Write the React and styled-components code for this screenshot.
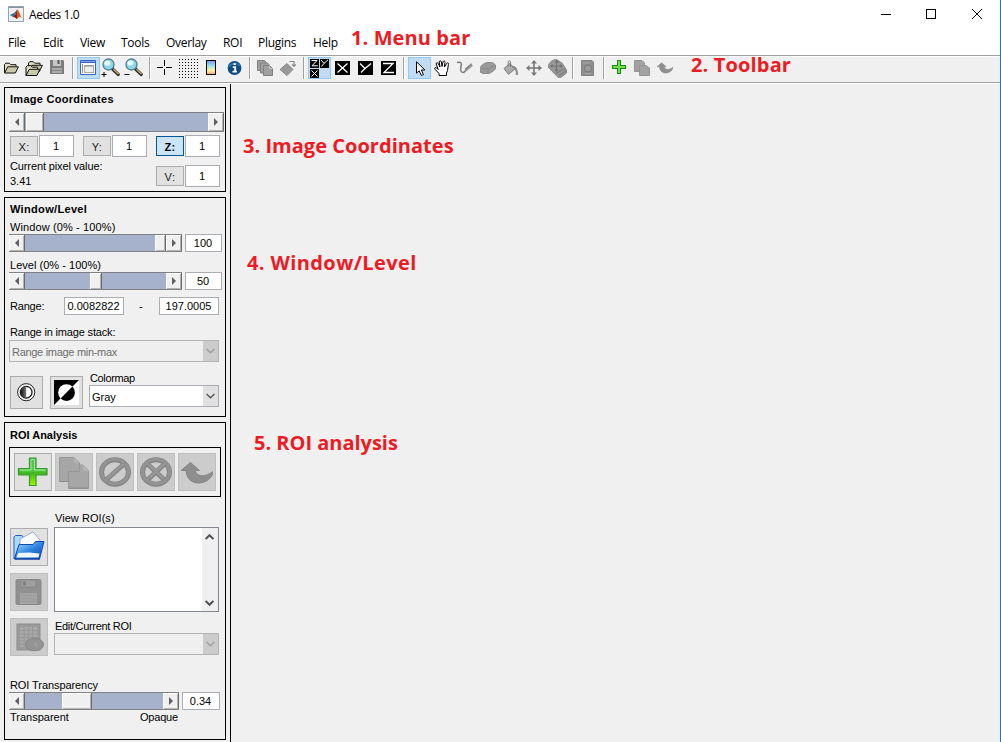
import React from "react";
import styled, { createGlobalStyle, css } from "styled-components";

const GlobalStyle = createGlobalStyle`
  * { box-sizing: border-box; }
  html, body { margin: 0; padding: 0; overflow: hidden; background: #f0f0f0; }
  svg { display: block; flex: none; }
`;

/* ---------- window chrome ---------- */

const Window = styled.div`
  position: relative;
  width: 1001px;
  height: 742px;
  display: flex;
  flex-direction: column;
  background: #f0f0f0;
  border-right: 1px solid #0a7bd8;
  color: #000;
  font-family: "Liberation Sans", Arial, sans-serif;
  font-size: 11px;
  overflow: hidden;
`;

const TitleBar = styled.header`
  flex: none;
  height: 31px;
  display: flex;
  align-items: flex-start;
  justify-content: space-between;
  background: #fff;
  padding: 6px 17px 0 8px;
`;

const TitleText = styled.div`
  display: flex;
  gap: 5px;
  font: 12px/17px "Open Sans", "Noto Sans", sans-serif;
  letter-spacing: -0.45px;
`;

const WindowButtons = styled.div`
  display: flex;
  gap: 34px;
  padding-top: 2px;
`;

const MenuBar = styled.nav`
  flex: none;
  height: 24px;
  display: flex;
  background: #fff;
  padding-left: 8px;
`;

const MenuItem = styled.span`
  width: ${(p) => p.$width}px;
  font: 12px/24px "Open Sans", "Noto Sans", sans-serif;
  letter-spacing: -0.3px;
  white-space: nowrap;
`;

const ToolBar = styled.div`
  flex: none;
  height: 29px;
  display: flex;
  background: #f0f0f0;
  border-top: 1px solid #a0a0a0;
  border-bottom: 1px solid #fff;
  box-shadow: inset 0 1px #fff, inset 0 -1px #a0a0a0;
  padding-top: 1px;
`;

const Tool = styled.button`
  flex: none;
  width: 23px;
  height: 22px;
  padding: ${(p) => (p.$right ? "0 0 0 1px" : "0 1px 0 0")};
  display: flex;
  align-items: center;
  justify-content: center;
  border: 1px solid ${(p) => (p.$active ? "#90c8f6" : "transparent")};
  background: ${(p) => (p.$active ? "#c0dcf3" : "transparent")};
`;

const Separator = styled.span`
  flex: none;
  width: 2px;
  height: 22px;
  margin: 0 3px;
  background: linear-gradient(90deg, #a0a0a0 50%, #fff 50%);
`;

const Body = styled.main`
  flex: 1;
  display: flex;
  min-height: 0;
`;

const Sidebar = styled.aside`
  width: 231px;
  border-right: 1px solid #000;
  padding: 3px 4px 0 4px;
  display: flex;
  flex-direction: column;
  gap: 5px;
`;

const Panel = styled.section`
  flex: none;
  width: 222px;
  height: ${(p) => p.$height}px;
  border: 1px solid #000;
  padding: ${(p) => p.$top || 4}px 0 0 4px;
`;

/* ---------- shared controls ---------- */

const Heading = styled.h2`
  margin: 0 0 0 1px;
  font-size: 11px;
  line-height: 14px;
  font-weight: bold;
  letter-spacing: ${(p) => p.$spacing}px;
  white-space: nowrap;
`;

const Label = styled.div`
  height: 14px;
  line-height: 14px;
  width: ${(p) => (p.$width ? `${p.$width}px` : "auto")};
  margin: ${(p) => p.$top || 0}px 0 0 ${(p) => (p.$left === undefined ? 1 : p.$left)}px;
  letter-spacing: ${(p) => p.$spacing || 0}px;
  white-space: nowrap;
`;

const Row = styled.div`
  display: flex;
  align-items: ${(p) => p.$align || "flex-start"};
  gap: ${(p) => p.$gap || 0}px;
  margin-top: ${(p) => p.$top || 0}px;
  margin-left: ${(p) => p.$left || 0}px;
`;

const Column = styled.div`
  display: flex;
  flex-direction: column;
  gap: ${(p) => p.$gap || 0}px;
`;

const Field = styled.div`
  flex: none;
  width: ${(p) => p.$width}px;
  height: ${(p) => p.$height || 18}px;
  line-height: ${(p) => (p.$height || 18) - 1}px;
  padding-right: 1px;
  border: 1px solid #abadb3;
  background: #fff;
  text-align: center;
`;

const AxisButton = styled.button`
  flex: none;
  width: 28px;
  height: 20px;
  padding: 2px 0 0;
  border: 1px solid ${(p) => (p.$active ? "#00559b" : "#adadad")};
  background: ${(p) => (p.$active ? "#cce4f7" : "#e1e1e1")};
  color: ${(p) => (p.$active ? "#000" : "#222")};
  font: ${(p) => (p.$active ? "bold" : "normal")} 11px/15px "Liberation Sans", Arial, sans-serif;
  letter-spacing: 0.4px;
`;

const IconButton = styled.button`
  flex: none;
  width: ${(p) => p.$size || 38}px;
  height: ${(p) => p.$size || 38}px;
  padding: 0;
  display: flex;
  align-items: center;
  justify-content: center;
  border: 1px solid ${(p) => (p.$disabled ? "#bfbfbf" : "#adadad")};
  background: ${(p) => (p.$disabled ? "#cccccc" : "#e1e1e1")};
`;

const SliderFrame = styled.div`
  flex: none;
  display: flex;
  width: ${(p) => p.$width}px;
  height: ${(p) => p.$height || 18}px;
  background: #a6b1cb;
  border-top: 1px solid #808080;
  border-bottom: 1px solid #808080;
`;

const raised = css`
  background: #f0f0f0;
  border-right: 1px solid #696969;
  box-shadow: inset 1px 1px #fff, inset -1px -1px #b4b4b4;
`;

const SliderArrow = styled.span`
  flex: none;
  width: 16px;
  display: flex;
  align-items: center;
  justify-content: center;
  ${raised}
`;

const SliderThumb = styled.span`
  flex: none;
  width: ${(p) => p.$width}px;
  margin-left: ${(p) => p.$offset}px;
  margin-right: auto;
  ${raised}
`;

const ComboFrame = styled.div`
  display: flex;
  justify-content: space-between;
  width: ${(p) => p.$width}px;
  height: 22px;
  border: 1px solid ${(p) => (p.$disabled ? "#b4b4b4" : "#abadb3")};
  background: ${(p) => (p.$disabled ? "#efefef" : "#fff")};
  color: ${(p) => (p.$disabled ? "#6d6d6d" : "#000")};
  line-height: 22px;
  padding-left: 2px;
  letter-spacing: ${(p) => p.$spacing || 0}px;
`;

const ComboArrow = styled.span`
  width: 15px;
  padding-right: 1px;
  display: flex;
  align-items: center;
  justify-content: center;
  background: ${(p) => (p.$disabled ? "#cccccc" : "#e1e1e1")};
`;

const ListBox = styled.div`
  width: 165px;
  height: 85px;
  display: flex;
  justify-content: flex-end;
  border: 1px solid #828790;
  background: #fff;
`;

const ListScroll = styled.div`
  width: 16px;
  display: flex;
  flex-direction: column;
  justify-content: space-between;
  align-items: center;
  padding: 6px 1px 5px 0;
  background: #f0f0f0;
`;

const ToolGroup = styled.div`
  width: 212px;
  height: 50px;
  display: flex;
  gap: 3px;
  padding: 5px 4px;
  margin-top: 5px;
  border: 1px solid #000;
`;

const Note = styled.div`
  position: absolute;
  left: ${(p) => p.$x}px;
  top: ${(p) => p.$y}px;
  color: #ed1c24;
  font: bold 20px/26px "Open Sans", "Noto Sans", sans-serif;
  letter-spacing: ${(p) => p.$spacing}px;
  white-space: nowrap;
`;

/* ---------- icons ---------- */

const Icon = ({ children, size = 16, box = 16, crisp }) => (
  <svg width={size} height={size} viewBox={`0 0 ${box} ${box}`} fill="none" shapeRendering={crisp ? "crispEdges" : "auto"}>
    {children}
  </svg>
);

const Triangle = ({ right }) => (
  <svg width="4" height="8" viewBox="0 0 4 8">
    <path d={right ? "M0 0L4 4L0 8Z" : "M4 0L0 4L4 8Z"} fill="#606060" />
  </svg>
);

const Chevron = ({ color = "#505050", up, bold }) => (
  <svg width="9" height="6" viewBox="0 0 9 6" fill="none">
    <path d={up ? "M.6 5L4.5 1.2L8.4 5" : "M.6 1L4.5 4.8L8.4 1"} stroke={color} strokeWidth={bold ? 2 : 1.2} />
  </svg>
);

const Matlab = () => (
  <Icon>
    <rect x=".5" y=".5" width="15" height="15" fill="#eef0f2" stroke="#9aa4ae" />
    <path d="M1 1.5H15" stroke="#7d93ac" />
    <path d="M2 9L6 7L9 4L7 10L5 11Z" fill="#2f6ea5" />
    <path d="M9 3.5C10.5 3.5 12 9 14 12L11.5 10.5L9 13L6.5 10.5Z" fill="#d9541e" />
    <path d="M9 3.5C8.5 7 7.5 9.5 5 11L7 11.5L9 13Z" fill="#7c2418" />
  </Icon>
);

const FolderShape = ({ x = 0, y = 0 }) => (
  <g transform={`translate(${x} ${y})`} stroke="#111" strokeLinejoin="round">
    <path d="M.7 12.5V4L2 2.7H5.5L7 4.2H12.2V6" fill="#deddc2" />
    <path d="M.7 12.5L4 6.3H14.6L11.6 12.5Z" fill="#c9c9a8" />
  </g>
);

const FolderOpen = () => <Icon><FolderShape x={0.8} y={0.5} /></Icon>;
const Folders = () => (
  <Icon size={18} box={18}><FolderShape x={2.8} y={0} /><FolderShape x={0.3} y={4} /></Icon>
);
const SaveSmall = () => (
  <Icon>
    <path d="M1 0H14L15 1V14H1Z" fill="#7c7c7c" />
    <rect x="4" y="0" width="8" height="6" fill="#c6c6c6" />
    <rect x="8.5" y="0" width="2" height="4" fill="#555" />
    <rect x="3" y="8" width="10" height="5" fill="#aaa" />
    <path d="M3 10.5H13" stroke="#888" />
  </Icon>
);
const PanelView = () => (
  <Icon>
    <rect x="0" y="0" width="16" height="15" fill="#3465c0" rx="1" />
    <rect x="1" y="3" width="14" height="11" fill="#fff" />
    <path d="M1 1.5H15" stroke="#7ba0ea" />
    <rect x="4.5" y="5.5" width="9" height="7" fill="#eee" stroke="#aaa" />
    <path d="M2.5 4V13M5 6H13" stroke="#777" strokeWidth=".8" />
  </Icon>
);
const Magnifier = ({ plus }) => (
  <Icon size={20} box={20}>
    <path d="M11.5 11L17.3 16.5" stroke="#333" strokeWidth="3.2" strokeLinecap="round" />
    <path d="M12.5 11.2L17.5 16" stroke="#c9a46a" strokeWidth="1.5" />
    <circle cx="7.5" cy="6.5" r="5.5" fill="#8fd8ec" stroke="#527c93" strokeWidth="1.3" />
    <ellipse cx="6.3" cy="5" rx="3" ry="2.5" fill="#e8fbff" />
    <path d={plus ? "M.5 16.5H5.5M3 14V19" : "M.5 16.5H5.5"} stroke="#000" />
  </Icon>
);
const Crosshair = () => (
  <Icon crisp><path d="M0 7.5H6M9 7.5H15M7.5 0V6M7.5 9V15" stroke="#000" /></Icon>
);
const Dots = () => (
  <Icon size={20} box={20} crisp>
    {[1, 4, 7, 10, 13, 16, 19].flatMap((y) =>
      [1, 4, 7, 10, 13, 16, 19].map((x) => <rect key={`${x}-${y}`} x={x} y={y} width="1" height="1" fill="#000" />)
    )}
  </Icon>
);
const ColorBar = () => (
  <Icon>
    <defs>
      <linearGradient id="bar" x1="0" y1="0" x2="0" y2="1">
        <stop offset="0" stopColor="#7f91ee" /><stop offset=".35" stopColor="#93dff5" />
        <stop offset=".7" stopColor="#fff3a0" /><stop offset="1" stopColor="#ff9b8e" />
      </linearGradient>
    </defs>
    <rect x="3.5" y=".5" width="9" height="14" fill="url(#bar)" stroke="#000" />
  </Icon>
);
const Info = () => (
  <Icon>
    <g transform="translate(1 0)">
      <circle cx="7.5" cy="8" r="6.9" fill="#0b4c85" />
      <path d="M2 7A6 5 0 0 1 13 6" stroke="#3477ad" strokeWidth="1.5" />
      <path d="M6.5 4.2H8.8M5.8 7.2H8.2V11.2M5.5 11.7H10" stroke="#fff" strokeWidth="1.8" />
    </g>
  </Icon>
);
const CopyStack = () => (
  <Icon>
    <g fill="#a0a0a0" stroke="#808080">
      <path d="M.5 .5H7.5L9 2V10.5H.5Z" /><path d="M3.5 3H10.5L12 4.5V13H3.5Z" /><path d="M6.5 5.5H12.5L15.5 8.5V15.5H6.5Z" />
    </g>
    <path d="M12.5 5.5V8.5H15.5" stroke="#c4c4c4" />
  </Icon>
);
const Rotate = () => (
  <Icon>
    <path d="M0 9.5L7 3.5L13 9.5L7 15.5Z" fill="#989898" stroke="#888" />
    <path d="M9.5 1.5H14V6M12 4.5L14 6.5L16 4.5" stroke="#888" strokeWidth="1.2" />
  </Icon>
);
const Views = () => (
  <Icon size={20} box={20} crisp>
    <g transform="translate(0 1)">
      <g fill="#000"><rect width="9" height="9" /><rect x="10" width="9" height="9" /><rect y="10" width="9" height="9" /></g>
      <g stroke="#fff" shapeRendering="auto">
        <polyline points="1.5,1.5 7,1.5 2,6.8 7.8,6.8" />
        <polyline points="11,1 14,4.4 18,.8" /><polyline points="14,4.4 11.5,7.5" />
        <polyline points="1.5,11.5 7.5,17.5" /><polyline points="7.5,11.5 1.5,17.5" />
      </g>
    </g>
  </Icon>
);
const Axis = ({ lines }) => (
  <Icon>
    <rect x="0" y="1" width="15" height="14" fill="#000" />
    {lines.map((l) => <polyline key={l} points={l} stroke="#fff" strokeWidth="1.3" />)}
  </Icon>
);
const Pointer = () => (
  <Icon>
    <path d="M5.5 1.8V13.2L8.2 10.8L10.4 15.5L12.5 14.6L10.3 10H14Z" fill="#fff" stroke="#000" />
  </Icon>
);
const Hand = () => (
  <Icon>
    <path d="M5 15.5V13.5L1 9.2C.2 7.7 1.5 7 2.5 7.8L4.2 9.5L2.2 4C2 2.5 3.7 2.2 4.2 3.5L6 7L5.2 2C5.3 .4 7.2 .4 7.4 2L8 6.5L9 1.8C9.5 .3 11.3 .8 11 2.5L10.4 7L12.8 3.3C13.8 2.3 15 3.2 14.4 4.5L13.5 10.5L12.5 13V15.5Z" fill="#fff" stroke="#000" />
  </Icon>
);
const Freehand = () => (
  <Icon>
    <path d="M0 2.5C4 1.5 5 3 4 6C3.5 9 3 12 6 12.5C8 12.8 8.5 10 10 8.5" stroke="#7c7c7c" strokeWidth="1.5" />
    <path d="M8.5 10L15 4.5" stroke="#999" strokeWidth="3" /><path d="M9 9L14.5 4" stroke="#777" />
  </Icon>
);
const Eraser = () => (
  <Icon>
    <path d="M0 8.5C1 5 5 2.5 8 2.5L13 2.8L15.5 5V9C13 11 11 13.5 8 13.5H3L0 12Z" fill="#9a9a9a" stroke="#8c8c8c" />
    <path d="M1.5 8.5L8 9L14.5 5.5M8 9V13" stroke="#868686" />
  </Icon>
);
const Bucket = () => (
  <Icon>
    <path d="M1 8.5L7 3.5L12 9L5.5 14.3Z" fill="#ababab" stroke="#7c7c7c" />
    <path d="M7.5 7V1.5Q6 0 5.2 1.5V6" stroke="#7c7c7c" /><path d="M9 7Q14 6.5 14 15" stroke="#8c8c8c" strokeWidth="2.2" />
  </Icon>
);
const Move = () => (
  <Icon>
    <path d="M8 2V14M2 8H14" stroke="#777" strokeWidth="1.6" />
    <path d="M8 0L11 3.5H5ZM8 16L5 12.5H11ZM0 8L3.5 5V11ZM16 8L12.5 11V5Z" fill="#777" />
  </Icon>
);
const MoveStack = () => (
  <Icon size={19} box={19}>
    <path d="M0 8C1 3 5 0 9 .8L14 4L18.5 11V14L13 18.3H10Z" fill="#979797" stroke="#868686" />
    <path d="M8.5 2V12M3 7H14M8 14.5L16.5 9.5M10.5 17L18 12" stroke="#737373" />
    <path d="M8.5 1L10.5 3.5H6.5ZM2 7L4.5 5V9ZM15 7L12.5 9V5ZM8.5 13L6.5 10.5H10.5Z" fill="#6e6e6e" />
  </Icon>
);
const DocRound = () => (
  <Icon>
    <path d="M1.5 .5H12L13.5 2V15.5H1.5Z" fill="#8f8f8f" stroke="#828282" />
    <circle cx="8" cy="8.5" r="3.6" fill="#9b9b9b" stroke="#767676" /><path d="M3 3H10M5 13.5H11" stroke="#a6a6a6" />
  </Icon>
);
const PlusSmall = () => (
  <Icon crisp>
    <path d="M6.5 .5H9.5V5.5H14.5V8.5H9.5V13.5H6.5V8.5H1.5V5.5H6.5Z" fill="#6fdf4a" stroke="#178a18" />
  </Icon>
);
const CopySmall = () => (
  <Icon>
    <path d="M.5 .5H8L10.5 3V11.5H.5Z" fill="#a2a2a2" stroke="#949494" />
    <path d="M5.5 5.5H12L15.5 8V15.5H5.5Z" fill="#a2a2a2" stroke="#949494" />
  </Icon>
);
const UndoShape = () => (
  <path d="M0 14.5L9.5 6.5L18.5 14.5H14C15 19 20 20.5 24 19.5C28 18.7 30 16.5 32 15.5C31.5 22 25 27 17.5 27C10 27 5.5 22 5 14.5Z" fill="#8e8e8e" stroke="#848484" />
);
const UndoSmall = () => <Icon size={16} box={32}><g transform="translate(0 -1)"><UndoShape /></g></Icon>;

const PlusLarge = () => (
  <Icon size={32} box={32}>
    <defs>
      <linearGradient id="green" x1="0" y1="0" x2="0" y2="1">
        <stop offset="0" stopColor="#55b957" /><stop offset=".45" stopColor="#55cc42" />
        <stop offset=".55" stopColor="#3eb51c" /><stop offset="1" stopColor="#a3fb00" />
      </linearGradient>
    </defs>
    <path d="M12.5 2H19V12.5H30V18.8H19V29.5H12.5V18.8H1.5V12.5H12.5Z" fill="url(#green)" stroke="#35992d" strokeWidth="1.2" strokeLinejoin="round" />
    <path d="M14 3.5H17.5V14H28.5M3 14H14V4" stroke="#a5e79f" strokeWidth="1" />
  </Icon>
);
const CopyLarge = () => (
  <Icon size={34} box={34}>
    <g fill="#a6a6a6" stroke="#969696">
      <path d="M2.5 2.5H17L22.5 8V26.5H2.5Z" /><path d="M11.5 16.5V33.5H31.5V16L26 10H22.5V16.5Z" />
    </g>
    <path d="M17 2.5V8H22.5M26 10V16H31.5" fill="#b8b8b8" stroke="#aaa" /><path d="M3 26.5H11M12 33H31" stroke="#8c8c8c" />
  </Icon>
);
const Forbidden = ({ cross }) => (
  <Icon size={34} box={34}>
    <ellipse cx="17" cy="17" rx="13.5" ry="12.2" stroke="#858585" strokeWidth="5" />
    <ellipse cx="17" cy="16.5" rx="13.5" ry="12.2" stroke="#949494" strokeWidth="3" />
    <path d={cross ? "M9 9.5L25 24.5M25 9.5L9 24.5" : "M8.5 24.5L25.5 9.5"} stroke="#858585" strokeWidth="5" />
    <path d={cross ? "M9 9L25 24M25 9L9 24" : "M8.5 24L25.5 9"} stroke="#969696" strokeWidth="3" />
  </Icon>
);
const UndoLarge = () => <Icon size={32} box={32}><UndoShape /></Icon>;

const Contrast = () => (
  <Icon size={19} box={19}>
    <defs><linearGradient id="half"><stop offset="0" stopColor="#111" /><stop offset="1" stopColor="#777" /></linearGradient></defs>
    <circle cx="9.2" cy="9.2" r="8.6" fill="#f4f4f4" stroke="#222" />
    <circle cx="9.2" cy="9.2" r="5.8" fill="#fff" stroke="#222" strokeWidth="1.3" />
    <path d="M9.2 3.5A5.7 5.7 0 0 0 9.2 14.9Z" fill="url(#half)" />
  </Icon>
);
const Invert = () => (
  <Icon size={25} box={24}>
    <rect width="24" height="24" fill="#fff" />
    <path d="M0 0H24L0 24Z" fill="#000" />
    <circle cx="12" cy="12" r="8" fill="#fff" />
    <path d="M17.7 6.3A8 8 0 0 1 6.3 17.7Z" fill="#000" />
  </Icon>
);
const OpenLarge = () => (
  <Icon size={32} box={32}>
    <defs>
      <linearGradient id="blue" x1="0" y1="0" x2="1" y2="1">
        <stop offset="0" stopColor="#aee3ff" /><stop offset=".5" stopColor="#3187df" /><stop offset="1" stopColor="#083dac" />
      </linearGradient>
    </defs>
    <path d="M1 28V6L2.5 4.5H9L11 7H20V12H7L1.5 28Z" fill="#a9dcfb" stroke="#2362c4" />
    <path d="M7 13V8L20 .8L27 9V15H7Z" fill="#f8faff" stroke="#9aabc9" />
    <path d="M1.5 28L6 13.5H20L22.5 10.5H31L26.5 28Z" fill="url(#blue)" stroke="#1048b5" />
    <path d="M3.5 26.5L5.2 22L16 21.5L26.5 22.5L25.5 26.5Z" fill="#eef6ff" />
    <path d="M2 28H27" stroke="#0a3c98" />
  </Icon>
);
const SaveLarge = () => (
  <Icon size={30} box={30}>
    <rect x="2" y="2.5" width="25" height="25" rx="1.5" fill="#909090" stroke="#888" />
    <rect x="7" y="3" width="15" height="7" fill="#a0a0a0" stroke="#888" /><rect x="9" y="4.5" width="3" height="4" fill="#808080" />
    <rect x="6" y="16" width="17" height="11" fill="#a3a3a3" /><path d="M7 18.5H22M7 21.5H22M7 24.5H22" stroke="#9b9b9b" />
  </Icon>
);
const TableLarge = () => (
  <Icon size={30} box={30}>
    <rect x="3" y="2" width="23" height="26" fill="#9b9b9b" stroke="#8b8b8b" />
    <rect x="6" y="5" width="17" height="20" fill="#a9a9a9" />
    <path d="M6 8.5H23M6 12H23M6 15.5H23M6 19H23M6 22.5H23M10 5V25M14.3 5V25M18.6 5V25" stroke="#989898" />
    <ellipse cx="20.5" cy="22.5" rx="9" ry="6.2" fill="#949494" stroke="#868686" /><path d="M20 23L22 19L24 26Z" fill="#a0a0a0" />
  </Icon>
);

/* ---------- composed controls ---------- */

const Slider = ({ width, height, offset, thumb }) => (
  <SliderFrame $width={width} $height={height}>
    <SliderArrow><Triangle /></SliderArrow>
    <SliderThumb $offset={offset} $width={thumb} />
    <SliderArrow><Triangle right /></SliderArrow>
  </SliderFrame>
);

const Combo = ({ width, disabled, spacing, children }) => (
  <ComboFrame $width={width} $disabled={disabled} $spacing={spacing}>
    <span>{children}</span>
    <ComboArrow $disabled={disabled}><Chevron color={disabled ? "#9b9b9b" : "#505050"} /></ComboArrow>
  </ComboFrame>
);

const AxisPair = ({ name, value, active }) => (
  <Row $gap={1} $align="center">
    <AxisButton $active={active}>{name}</AxisButton>
    <Field $width={35} $height={22}>{value}</Field>
  </Row>
);

const menus = [
  ["File", 35], ["Edit", 37], ["View", 41], ["Tools", 45], ["Overlay", 57], ["ROI", 35], ["Plugins", 55], ["Help", 40],
];

const toolGroups = [
  { tools: [[FolderOpen], [Folders], [SaveSmall]] },
  { tools: [[PanelView, {}, true], [Magnifier, { plus: true }], [Magnifier]] },
  { tools: [[Crosshair], [Dots], [ColorBar], [Info]] },
  { tools: [[CopyStack], [Rotate]] },
  {
    right: true,
    tools: [
      [Views, {}, true],
      [Axis, { lines: ["2.5,3.5 12.5,12.5", "12.5,3.5 2.5,12.5"] }],
      [Axis, { lines: ["2,3.5 7,8.5 13,3.5", "7,8.5 3,12.5"] }],
      [Axis, { lines: ["2,3.5 12,3.5 3,12.5 13,12.5"] }],
    ],
  },
  { tools: [[Pointer, {}, true], [Hand], [Freehand], [Eraser], [Bucket], [Move], [MoveStack]] },
  { tools: [[DocRound]] },
  { tools: [[PlusSmall], [CopySmall], [UndoSmall]] },
];

export default function App() {
  return (
    <>
      <GlobalStyle />
      <Window>
        <TitleBar>
          <TitleText><Matlab />Aedes 1.0</TitleText>
          <WindowButtons>
            <Icon size={12} box={12} crisp><path d="M2 6.5H12" stroke="#000" /></Icon>
            <Icon size={12} box={12} crisp><rect x="1.5" y="1.5" width="9" height="9" stroke="#000" /></Icon>
            <Icon size={12} box={12}><path d="M1 1L11 11M11 1L1 11" stroke="#000" /></Icon>
          </WindowButtons>
        </TitleBar>
        <MenuBar>
          {menus.map(([name, width]) => <MenuItem key={name} $width={width}>{name}</MenuItem>)}
        </MenuBar>
        <ToolBar>
          {toolGroups.map(({ tools, right }, g) => (
            <React.Fragment key={g}>
              {g > 0 && <Separator />}
              {tools.map(([Glyph, props, active], i) => (
                <Tool key={i} $active={active} $right={right}><Glyph {...props} /></Tool>
              ))}
            </React.Fragment>
          ))}
        </ToolBar>

        <Body>
          <Sidebar>
            <Panel $height={105}>
              <Heading $spacing={0.28}>Image Coordinates</Heading>
              <Row $top={6}><Slider width={215} height={20} offset={1} thumb={18} /></Row>
              <Row $top={3} $left={1} $gap={9}>
                <AxisPair name="X:" value="1" />
                <AxisPair name="Y:" value="1" />
                <AxisPair name="Z:" value="1" active />
              </Row>
              <Row $top={2}>
                <Column>
                  <Label $width={146} $spacing={-0.12}>Current pixel value:</Label>
                  <Label $top={1}>3.41</Label>
                </Column>
                <Row $top={6}><AxisPair name="V:" value="1" /></Row>
              </Row>
            </Panel>

            <Panel $height={220}>
              <Heading $spacing={0.33}>Window/Level</Heading>
              <Label $top={4} $spacing={0.12}>Window (0% - 100%)</Label>
              <Row $gap={3}><Slider width={173} offset={130} thumb={11} /><Field $width={37}>100</Field></Row>
              <Label $top={6} $spacing={0.03}>Level (0% - 100%)</Label>
              <Row $gap={3}><Slider width={173} offset={65} thumb={12} /><Field $width={37}>50</Field></Row>
              <Row $top={7} $align="center">
                <Label $width={54} $spacing={-0.2}>Range:</Label>
                <Row $gap={15} $align="center">
                  <Field $width={60}>0.0082822</Field><Label $width={5} $left={0}>-</Label><Field $width={60}>197.0005</Field>
                </Row>
              </Row>
              <Label $top={10} $spacing={-0.17}>Range in image stack:</Label>
              <Row $top={1}><Combo width={210} disabled spacing={-0.3}>Range image min-max</Combo></Row>
              <Row $top={9} $left={1}>
                <Row $gap={7} $top={5}>
                  <IconButton $size={33}><Contrast /></IconButton>
                  <IconButton $size={33}><Invert /></IconButton>
                </Row>
                <Row $left={6}>
                  <Column><Label $spacing={-0.35}>Colormap</Label><Combo width={130}>Gray</Combo></Column>
                </Row>
              </Row>
            </Panel>

            <Panel $height={318} $top={5}>
              <Heading $spacing={0}>ROI Analysis</Heading>
              <ToolGroup>
                <IconButton><PlusLarge /></IconButton>
                <IconButton $disabled><CopyLarge /></IconButton>
                <IconButton $disabled><Forbidden /></IconButton>
                <IconButton $disabled><Forbidden cross /></IconButton>
                <IconButton $disabled><UndoLarge /></IconButton>
              </ToolGroup>
              <Row $top={14} $left={1} $gap={6}>
                <Row $top={17}>
                  <Column $gap={7}>
                    <IconButton><OpenLarge /></IconButton>
                    <IconButton $disabled><SaveLarge /></IconButton>
                    <IconButton $disabled><TableLarge /></IconButton>
                  </Column>
                </Row>
                <Column>
                  <Label $spacing={0.05}>View ROI(s)</Label>
                  <Row $top={2}>
                    <ListBox><ListScroll><Chevron up bold /><Chevron bold /></ListScroll></ListBox>
                  </Row>
                  <Label $top={7} $spacing={-0.3}>Edit/Current ROI</Label>
                  <Combo width={165} disabled />
                </Column>
              </Row>
              <Label $top={22} $spacing={-0.08}>ROI Transparency</Label>
              <Row $gap={3}><Slider width={170} offset={37} thumb={30} /><Field $width={38}>0.34</Field></Row>
              <Row><Label $width={130}>Transparent</Label><Label $left={0} $spacing={-0.2}>Opaque</Label></Row>
            </Panel>
          </Sidebar>
        </Body>

        <Note $x={351} $y={25} $spacing={0.1}>1. Menu bar</Note>
        <Note $x={691} $y={52} $spacing={0.15}>2. Toolbar</Note>
        <Note $x={243} $y={133} $spacing={0.03}>3. Image Coordinates</Note>
        <Note $x={247} $y={250} $spacing={0.4}>4. Window/Level</Note>
        <Note $x={254} $y={430} $spacing={-0.01}>5. ROI analysis</Note>
      </Window>
    </>
  );
}
